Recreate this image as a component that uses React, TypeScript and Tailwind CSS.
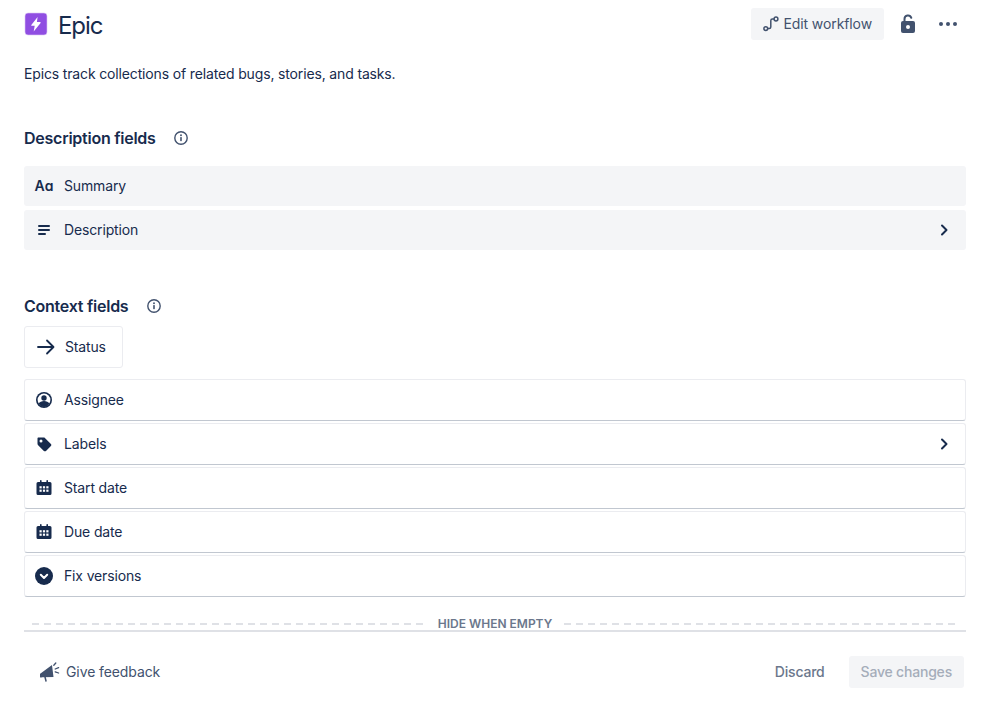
const font = "[font-family:Inter,'Noto_Sans',sans-serif]";

function EpicIcon() {
  return (
    <svg width="24" height="24" viewBox="0 0 24 24">
      <rect x="1" y="1" width="22" height="22" rx="3" fill="#904EE2" stroke="#DCC8F5" strokeWidth="0.6" />
      <path d="M13.600 5 7.300 13a.5.5 0 0 0 .4.8h3l-1 5.700 6.900-8.600a.5.5 0 0 0-.4-.8h-3.300z" fill="#fff" />
    </svg>
  );
}

function InfoIcon() {
  return (
    <svg width="16" height="16" viewBox="0 0 16 16" fill="none">
      <circle cx="8" cy="8" r="6.200" stroke="#42526E" strokeWidth="1.400" />
      <circle cx="8" cy="5.200" r="0.950" fill="#42526E" />
      <rect x="7.200" y="7" width="1.600" height="4.200" rx="0.600" fill="#42526E" />
    </svg>
  );
}

function Chevron() {
  return (
    <svg width="24" height="24" viewBox="0 0 24 24" fill="none">
      <path d="M10 7.500 14.500 12 10 16.500" stroke="#172B4D" strokeWidth="2" strokeLinecap="round" strokeLinejoin="round" />
    </svg>
  );
}

function CalendarIcon() {
  return (
    <svg width="24" height="24" viewBox="0 0 24 24">
      <path d="M6 6h2V4.800a.8.8 0 0 1 1.600 0V6h4.800V4.800a.8.8 0 0 1 1.600 0V6h2A1.500 1.500 0 0 1 19.500 7.500v10A1.500 1.500 0 0 1 18 19H6a1.500 1.500 0 0 1-1.500-1.500v-10A1.500 1.500 0 0 1 6 6z" fill="#172B4D" />
      <g fill="#fff">
        <rect x="7.500" y="10.200" width="2.200" height="2.200" />
        <rect x="10.900" y="10.200" width="2.200" height="2.200" />
        <rect x="14.300" y="10.200" width="2.200" height="2.200" />
        <rect x="7.500" y="13.600" width="2.200" height="2.200" />
        <rect x="10.900" y="13.600" width="2.200" height="2.200" />
        <rect x="14.300" y="13.600" width="2.200" height="2.200" />
      </g>
    </svg>
  );
}

function SummaryIcon() {
  return (
    <span className="w-6 text-center text-[14px] font-semibold leading-none text-[#172B4D]">Aɑ</span>
  );
}

function DescriptionIcon() {
  return (
    <svg width="24" height="24" viewBox="0 0 24 24">
      <g fill="#172B4D">
        <rect x="6" y="7" width="12" height="2" rx="1" />
        <rect x="6" y="11" width="12" height="2" rx="1" />
        <rect x="6" y="15" width="8" height="2" rx="1" />
      </g>
    </svg>
  );
}

function AssigneeIcon() {
  return (
    <svg width="24" height="24" viewBox="0 0 24 24">
      <circle cx="12" cy="12" r="8" fill="#172B4D" />
      <circle cx="12" cy="12" r="6.400" fill="#fff" />
      <circle cx="12" cy="10" r="2.700" fill="#172B4D" />
      <path d="M6.600 15.500c1-1.600 3-2.500 5.400-2.500s4.400.9 5.400 2.500A6.800 6.800 0 0 1 12 19a6.800 6.800 0 0 1-5.400-3.500z" fill="#172B4D" />
    </svg>
  );
}

function LabelIcon() {
  return (
    <svg width="24" height="24" viewBox="0 0 24 24">
      <path d="M6.500 5.500h5.300c.4 0 .8.200 1.100.4l6 6c.6.600.6 1.500 0 2.100l-4.900 4.900c-.6.600-1.500.6-2.100 0l-6-6c-.3-.3-.4-.7-.4-1.100V6.500c0-.6.400-1 1-1zM9 10.500a1.500 1.500 0 1 0 0-3 1.500 1.500 0 0 0 0 3z" fill="#172B4D" fillRule="evenodd" />
    </svg>
  );
}

function VersionIcon() {
  return (
    <svg width="24" height="24" viewBox="0 0 24 24" fill="none">
      <circle cx="12" cy="12" r="9" fill="#172B4D" />
      <path d="M8.800 10.800 12 14l3.200-3.200" stroke="#fff" strokeWidth="2" strokeLinecap="round" strokeLinejoin="round" />
    </svg>
  );
}

function ArrowIcon() {
  return (
    <svg width="20" height="20" viewBox="0 0 20 20" fill="none">
      <path d="M2 10h15M11 3.500l6.500 6.500-6.500 6.500" stroke="#172B4D" strokeWidth="1.800" strokeLinecap="round" strokeLinejoin="round" />
    </svg>
  );
}

function WorkflowIcon() {
  return (
    <svg width="16" height="16" viewBox="0 0 16 16" fill="none">
      <circle cx="2.800" cy="12.600" r="1.900" stroke="#42526E" strokeWidth="1.500" />
      <circle cx="13" cy="3" r="1.900" stroke="#42526E" strokeWidth="1.500" />
      <path d="M4.700 12.600h1.500c1 0 1.600-.6 1.600-1.500V4.700C7.800 3.700 8.400 3 9.400 3h1.700" stroke="#42526E" strokeWidth="1.500" />
    </svg>
  );
}

function LockIcon() {
  return (
    <svg width="24" height="24" viewBox="0 0 24 24" fill="none">
      <path d="M8.500 10V7a3.500 3.500 0 0 1 6.800-1.200" stroke="#42526E" strokeWidth="2" strokeLinecap="round" />
      <rect x="5" y="9" width="14" height="12" rx="2" fill="#42526E" />
      <circle cx="12" cy="15" r="2" fill="#fff" />
    </svg>
  );
}

function MoreIcon() {
  return (
    <svg width="24" height="24" viewBox="0 0 24 24" fill="#42526E">
      <circle cx="5" cy="12" r="2" />
      <circle cx="12" cy="12" r="2" />
      <circle cx="19" cy="12" r="2" />
    </svg>
  );
}

function FeedbackIcon() {
  return (
    <svg width="20" height="20" viewBox="0 0 20 20" fill="none">
      <path d="M.5 11.500 12 3l1.500 12-11.500.3a1.800 1.800 0 0 1-1.500-3.800z" fill="#42526E" />
      <path d="M5 15l1 4" stroke="#42526E" strokeWidth="1.500" strokeLinecap="round" />
      <path d="M13.800 3.200 15.800 1M15.200 7l3.400-1.400M15.200 9.800l3.400 1.200" stroke="#42526E" strokeWidth="1.300" strokeLinecap="round" />
    </svg>
  );
}

const descriptionFields = [
  { name: 'Summary', icon: <SummaryIcon />, more: false },
  { name: 'Description', icon: <DescriptionIcon />, more: true },
];

const contextFields = [
  { name: 'Assignee', icon: <AssigneeIcon />, more: false },
  { name: 'Labels', icon: <LabelIcon />, more: true },
  { name: 'Start date', icon: <CalendarIcon />, more: false },
  { name: 'Due date', icon: <CalendarIcon />, more: false },
  { name: 'Fix versions', icon: <VersionIcon />, more: false },
];

function FieldRow({ name, icon, more, flat }: { name: string; icon: React.ReactNode; more: boolean; flat?: boolean }) {
  return (
    <div
      className={
        flat
          ? 'flex h-10 items-center rounded-[3px] bg-[#F4F5F7] pl-2 pr-[10px]'
          : 'flex h-[42px] items-center rounded-[3px] border border-[#EBECF0] border-b-[#C1C7D0] bg-white pl-[7px] pr-[9px]'
      }
    >
      <div className="flex h-6 w-6 items-center justify-center">{icon}</div>
      <span className="ml-2 flex-1 text-sm tracking-[-0.15px] text-[#172B4D]">{name}</span>
      {more && <Chevron />}
    </div>
  );
}

export default function App() {
  return (
    <div className={`h-[702px] w-[996px] overflow-hidden bg-white pl-6 pr-[30px] pt-2 ${font}`}>
      <div className="flex h-8 items-center justify-between">
        <div className="flex items-center">
          <EpicIcon />
          <span className="ml-[10px] mt-1 text-2xl leading-8 tracking-[-1.1px] text-[#172B4D]">Epic</span>
        </div>
        <div className="flex items-center">
          <button className="flex h-8 items-center rounded-[3px] bg-[#F4F5F7] px-3 text-sm tracking-[-0.1px] text-[#42526E]">
            <WorkflowIcon />
            <span className="ml-1">Edit workflow</span>
          </button>
          <div className="ml-3 flex h-8 w-6 items-center justify-center">
            <LockIcon />
          </div>
          <div className="ml-4 mr-[6px] flex h-8 w-6 items-center justify-center">
            <MoreIcon />
          </div>
        </div>
      </div>

      <p className="mt-6 text-sm leading-5 tracking-[-0.15px] text-[#172B4D]">Epics track collections of related bugs, stories, and tasks.</p>

      <div className="mt-[44px] flex h-5 items-center">
        <h2 className="text-base font-semibold tracking-[-0.25px] text-[#172B4D]">Description fields</h2>
        <span className="ml-[17px]"><InfoIcon /></span>
      </div>

      <div className="mt-[18px] flex flex-col gap-1">
        {descriptionFields.map((f) => (
          <FieldRow key={f.name} name={f.name} icon={f.icon} more={f.more} flat />
        ))}
      </div>

      <div className="mt-[46px] flex h-5 items-center">
        <h2 className="text-base font-semibold tracking-[-0.25px] text-[#172B4D]">Context fields</h2>
        <span className="ml-[18px]"><InfoIcon /></span>
      </div>

      <div className="mt-[10px] flex h-[42px] w-[99px] items-center rounded-[3px] border border-[#EBECF0] bg-white pl-[11px]">
        <ArrowIcon />
        <span className="ml-[9px] text-sm tracking-[-0.15px] text-[#172B4D]">Status</span>
      </div>

      <div className="mt-[11px] flex flex-col gap-[2px]">
        {contextFields.map((f) => (
          <FieldRow key={f.name} name={f.name} icon={f.icon} more={f.more} />
        ))}
      </div>

      <div className="mt-[20px] flex h-[13px] items-center px-2">
        <div className="h-[2px] flex-1 bg-[repeating-linear-gradient(90deg,#DFE1E6_0,#DFE1E6_7px,transparent_7px,transparent_12px)]" />
        <span className="px-3 text-xs font-semibold text-[#6B778C]">HIDE WHEN EMPTY</span>
        <div className="h-[2px] flex-1 bg-[repeating-linear-gradient(90deg,#DFE1E6_0,#DFE1E6_7px,transparent_7px,transparent_12px)]" />
      </div>
      <div className="border-t-2 border-[#DFE1E6]" />

      <div className="mt-[24px] flex h-8 items-center justify-between pr-[2px]">
        <div className="flex items-center pl-4 text-sm tracking-[-0.1px] text-[#42526E]">
          <FeedbackIcon />
          <span className="ml-[6px]">Give feedback</span>
        </div>
        <div className="flex items-center text-sm tracking-[-0.1px]">
          <span className="font-medium tracking-[-0.2px] text-[#6B778C]">Discard</span>
          <button className="ml-6 flex h-8 items-center rounded-[3px] bg-[#F4F5F7] px-3 font-medium tracking-[-0.2px] text-[#A5ADBA]">Save changes</button>
        </div>
      </div>
    </div>
  );
}
